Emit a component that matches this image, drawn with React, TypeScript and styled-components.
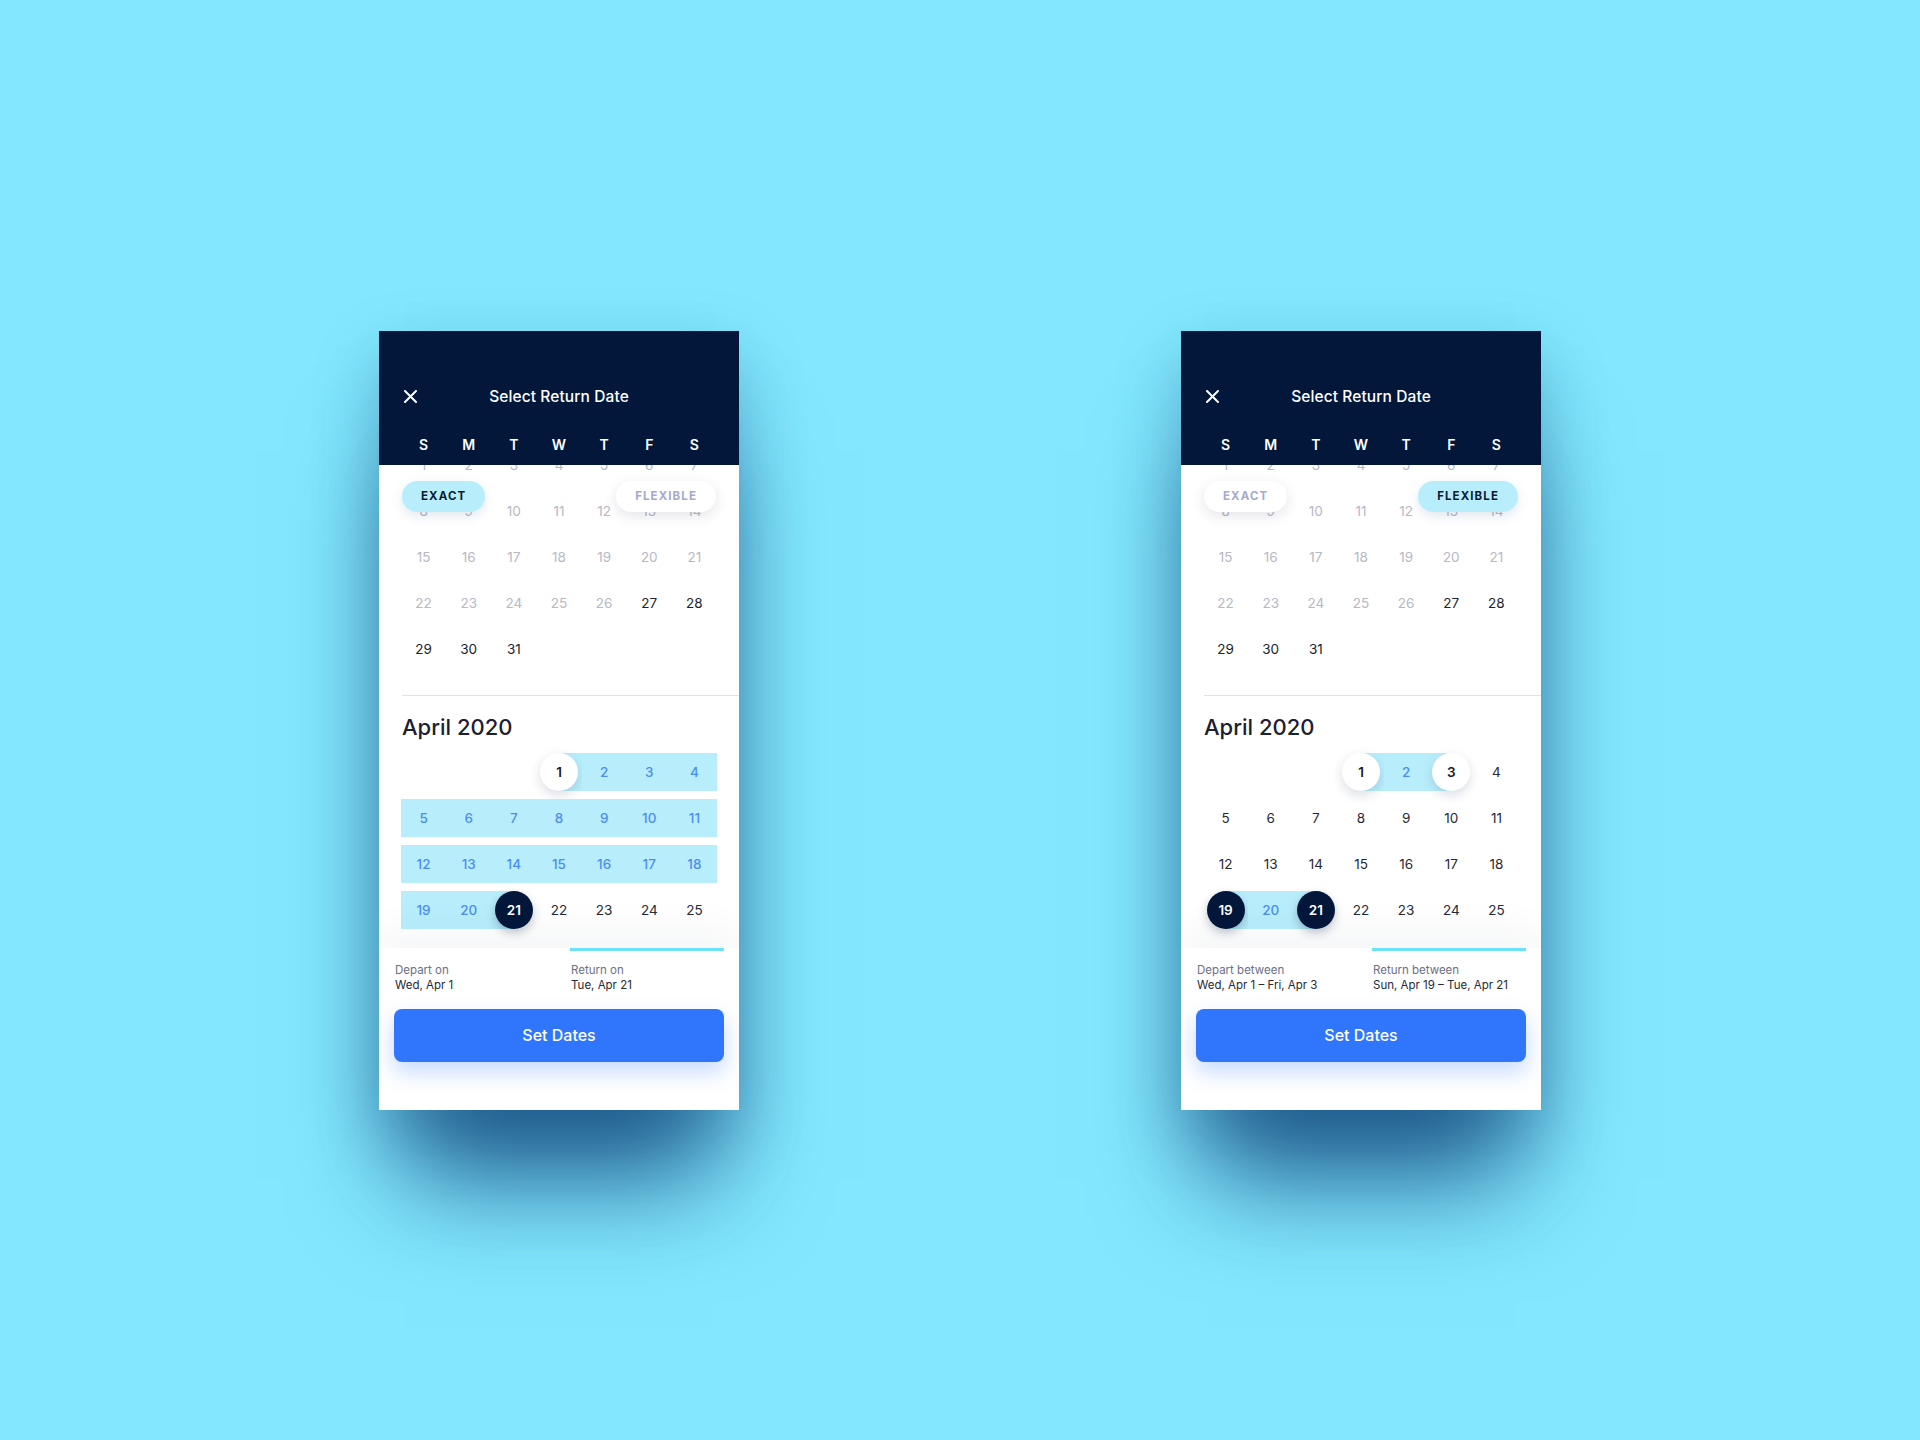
import React from 'react';
import styled, { createGlobalStyle, css } from 'styled-components';

type Tone = 'light' | 'dark';
type Mode = 'exact' | 'flexible';

interface Band {
  from: number;
  to: number;
  fromTone: Tone;
  toTone: Tone;
}

interface Summary {
  label: string;
  value: string;
}

interface PickerProps {
  mode: Mode;
  bands: Band[];
  depart: Summary;
  ret: Summary;
}

const WEEKDAYS = ['S', 'M', 'T', 'W', 'T', 'F', 'S'];

const GlobalStyle = createGlobalStyle`
  html, body {
    margin: 0;
    padding: 0;
  }
  body {
    font-family: Inter, 'Noto Sans', 'Liberation Sans', sans-serif;
    -webkit-font-smoothing: antialiased;
  }
`;

const Page = styled.main`
  min-height: 100vh;
  display: flex;
  align-items: center;
  justify-content: center;
  gap: 442px;
  background: #83e8ff;
`;

const Phone = styled.section`
  width: 360px;
  height: 779px;
  background: #fff;
  display: flex;
  flex-direction: column;
  overflow: hidden;
  box-shadow: 0 95px 100px -25px rgba(18, 72, 124, 0.85), 0 25px 60px rgba(18, 72, 124, 0.3);
`;

const Header = styled.header`
  position: relative;
  z-index: 2;
  flex-shrink: 0;
  height: 134px;
  box-sizing: border-box;
  padding: 54px 22px 0;
  background: #02173a;
  color: #fff;
`;

const TitleRow = styled.div`
  display: grid;
  grid-template-columns: 18px 1fr 18px;
  align-items: center;
  height: 24px;
`;

const CloseButton = styled.button`
  display: flex;
  align-items: center;
  justify-content: center;
  width: 18px;
  height: 18px;
  padding: 0;
  border: none;
  background: none;
  color: #fff;
`;

const Title = styled.h1`
  margin: 0;
  text-align: center;
  font-size: 15.5px;
  font-weight: 500;
  letter-spacing: 0.1px;
`;

const WeekRow = styled.div`
  display: grid;
  grid-template-columns: repeat(7, 1fr);
  margin-top: 26px;
  height: 20px;
  line-height: 20px;
  font-size: 14px;
  font-weight: 600;
  text-align: center;
`;

const Sheet = styled.div`
  position: relative;
  flex: 1;
  overflow: hidden;
`;

const MarchGrid = styled.div`
  display: grid;
  grid-template-columns: repeat(7, 1fr);
  grid-auto-rows: 46px;
  margin-top: -23px;
  padding: 0 22px;
`;

const Day = styled.span<{ $muted?: boolean }>`
  display: flex;
  align-items: center;
  justify-content: center;
  font-size: 13.5px;
  color: ${(p) => (p.$muted ? '#b6b8c4' : '#20232f')};
`;

const ModeSwitch = styled.div`
  position: absolute;
  top: 16px;
  left: 23px;
  right: 23px;
  display: flex;
  justify-content: space-between;
`;

const Pill = styled.button<{ $active: boolean }>`
  height: 31px;
  padding: 0 19px;
  border: none;
  border-radius: 16px;
  font-family: inherit;
  font-size: 11.5px;
  font-weight: 700;
  letter-spacing: 1.1px;
  ${(p) =>
    p.$active
      ? css`
          background: #b8eefc;
          color: #0e1a33;
          box-shadow: 0 4px 12px rgba(40, 90, 140, 0.14);
        `
      : css`
          background: #fff;
          color: #a5aacd;
          box-shadow: 0 4px 14px rgba(30, 40, 80, 0.12);
        `}
`;

const Divider = styled.hr`
  margin: 23px 0 0 23px;
  height: 1px;
  border: none;
  background: #e1e1ec;
`;

const MonthTitle = styled.h2`
  margin: 17px 0 0 23px;
  font-size: 22px;
  line-height: 28px;
  font-weight: 500;
  color: #1d2030;
`;

const RangeGrid = styled.div`
  display: grid;
  grid-template-columns: repeat(7, 1fr);
  grid-auto-rows: 38px;
  row-gap: 8px;
  margin-top: 12px;
  padding: 0 22px;
`;

type Fill = 'none' | 'full' | 'left' | 'right';

const RangeCell = styled.div<{ $fill: Fill; $inside: boolean }>`
  display: flex;
  align-items: center;
  justify-content: center;
  font-size: 13.5px;
  font-weight: ${(p) => (p.$inside ? 500 : 400)};
  color: ${(p) => (p.$inside ? '#4c8df5' : '#262936')};
  background: ${(p) =>
    p.$fill === 'full'
      ? '#b8eefc'
      : p.$fill === 'right'
      ? 'linear-gradient(90deg, transparent 50%, #b8eefc 50%)'
      : p.$fill === 'left'
      ? 'linear-gradient(90deg, #b8eefc 50%, transparent 50%)'
      : 'transparent'};
`;

const Circle = styled.span<{ $tone: Tone }>`
  display: flex;
  align-items: center;
  justify-content: center;
  width: 38px;
  height: 38px;
  border-radius: 50%;
  font-weight: 600;
  ${(p) =>
    p.$tone === 'dark'
      ? css`
          background: #02173a;
          color: #fff;
          box-shadow: 0 4px 10px rgba(2, 23, 58, 0.25);
        `
      : css`
          background: #fff;
          color: #151a2b;
          box-shadow: 0 4px 12px rgba(25, 40, 80, 0.16);
        `}
`;

const Footer = styled.footer`
  position: relative;
  z-index: 1;
  flex-shrink: 0;
  padding: 0 15px 48px;
  background: #fff;
  box-shadow: 0 -18px 36px rgba(25, 35, 70, 0.045);
`;

const Tabs = styled.div`
  display: grid;
  grid-template-columns: 176px 1fr;
`;

const Tab = styled.div<{ $active: boolean }>`
  padding: 12px 0 0 1px;
  border-top: 3px solid ${(p) => (p.$active ? '#6ae2f8' : 'transparent')};
  font-size: 11.5px;
  line-height: 15px;
`;

const TabLabel = styled.div`
  color: #6c6f86;
`;

const TabValue = styled.div`
  color: #262936;
`;

const SetButton = styled.button`
  display: block;
  width: 100%;
  height: 53px;
  margin-top: 16px;
  border: none;
  border-radius: 8px;
  background: #2f76fd;
  color: #fff;
  font-family: inherit;
  font-size: 16px;
  font-weight: 500;
  box-shadow: 0 10px 22px rgba(47, 118, 253, 0.28);
`;

function CloseIcon(): React.ReactElement {
  return (
    <svg width='13' height='13' viewBox='0 0 13 13' fill='none'>
      <path d='M1 1L12 12M12 1L1 12' stroke='currentColor' strokeWidth='2' strokeLinecap='round' />
    </svg>
  );
}

// March 2020 starts on a Sunday, April 2020 on a Wednesday
const marchDays = Array.from({ length: 31 }, (_, i) => i + 1);
const aprilLead = 3;
const aprilDays = Array.from({ length: 25 }, (_, i) => i + 1);

function cellFor(day: number, bands: Band[]): { fill: Fill; tone?: Tone; inside: boolean } {
  const band = bands.find((b) => day >= b.from && day <= b.to);
  if (!band) return { fill: 'none', inside: false };
  if (day === band.from) return { fill: band.from === band.to ? 'none' : 'right', tone: band.fromTone, inside: false };
  if (day === band.to) return { fill: 'left', tone: band.toTone, inside: false };
  return { fill: 'full', inside: true };
}

function DatePicker({ mode, bands, depart, ret }: PickerProps): React.ReactElement {
  return (
    <Phone>
      <Header>
        <TitleRow>
          <CloseButton aria-label='Close'>
            <CloseIcon />
          </CloseButton>
          <Title>Select Return Date</Title>
          <span />
        </TitleRow>
        <WeekRow>
          {WEEKDAYS.map((d, i) => (
            <span key={i}>{d}</span>
          ))}
        </WeekRow>
      </Header>

      <Sheet>
        <MarchGrid>
          {marchDays.map((d) => (
            <Day key={d} $muted={d < 27}>
              {d}
            </Day>
          ))}
        </MarchGrid>

        <ModeSwitch>
          <Pill $active={mode === 'exact'}>EXACT</Pill>
          <Pill $active={mode === 'flexible'}>FLEXIBLE</Pill>
        </ModeSwitch>

        <Divider />
        <MonthTitle>April 2020</MonthTitle>
        <RangeGrid>
          {Array.from({ length: aprilLead }, (_, i) => (
            <span key={`lead-${i}`} />
          ))}
          {aprilDays.map((d) => {
            const cell = cellFor(d, bands);
            return (
              <RangeCell key={d} $fill={cell.fill} $inside={cell.inside}>
                {cell.tone ? <Circle $tone={cell.tone}>{d}</Circle> : d}
              </RangeCell>
            );
          })}
        </RangeGrid>
      </Sheet>

      <Footer>
        <Tabs>
          <Tab $active={false}>
            <TabLabel>{depart.label}</TabLabel>
            <TabValue>{depart.value}</TabValue>
          </Tab>
          <Tab $active>
            <TabLabel>{ret.label}</TabLabel>
            <TabValue>{ret.value}</TabValue>
          </Tab>
        </Tabs>
        <SetButton>Set Dates</SetButton>
      </Footer>
    </Phone>
  );
}

export default function App(): React.ReactElement {
  return (
    <>
      <GlobalStyle />
      <Page>
        <DatePicker
          mode='exact'
          bands={[{ from: 1, to: 21, fromTone: 'light', toTone: 'dark' }]}
          depart={{ label: 'Depart on', value: 'Wed, Apr 1' }}
          ret={{ label: 'Return on', value: 'Tue, Apr 21' }}
        />
        <DatePicker
          mode='flexible'
          bands={[
            { from: 1, to: 3, fromTone: 'light', toTone: 'light' },
            { from: 19, to: 21, fromTone: 'dark', toTone: 'dark' },
          ]}
          depart={{ label: 'Depart between', value: 'Wed, Apr 1 – Fri, Apr 3' }}
          ret={{ label: 'Return between', value: 'Sun, Apr 19 – Tue, Apr 21' }}
        />
      </Page>
    </>
  );
}
